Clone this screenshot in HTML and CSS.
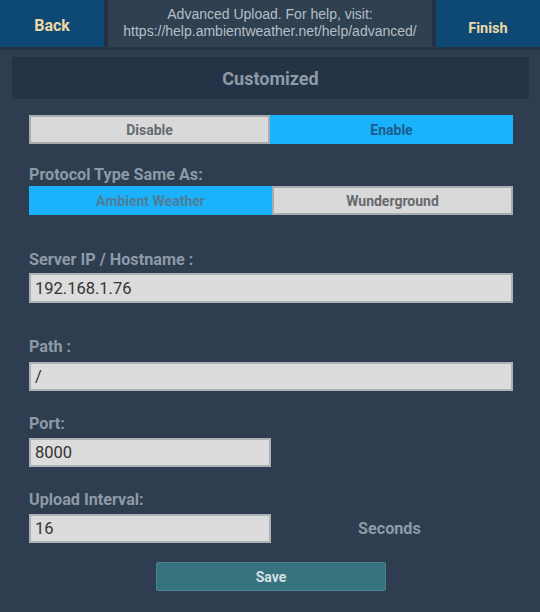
FILE: index.html
```html
<!DOCTYPE html>
<html>
<head>
<meta charset="utf-8">
<link rel="stylesheet" href="styles.css">
</head>
<body>
<div class="topbar">
  <div class="navbtn back">Back</div>
  <div class="helptext">Advanced Upload. For help, visit:<br>https://help.ambientweather.net/help/advanced/</div>
  <div class="navbtn finish">Finish</div>
</div>
<div class="panel-title">Customized</div>
<div class="content">
  <div class="seg seg-enable">
    <div class="seg-item off narrow">Disable</div>
    <div class="seg-item on dark">Enable</div>
  </div>
  <div class="label lbl-protocol">Protocol Type Same As:</div>
  <div class="seg">
    <div class="seg-item on muted">Ambient Weather</div>
    <div class="seg-item off narrow">Wunderground</div>
  </div>
  <div class="label lbl-server">Server IP / Hostname :</div>
  <div class="input wide tall">192.168.1.76</div>
  <div class="label lbl-path">Path :</div>
  <div class="input wide">/</div>
  <div class="label lbl-port">Port:</div>
  <div class="input half">8000</div>
  <div class="label lbl-port">Upload Interval:</div>
  <div class="row">
    <div class="input half">16</div>
    <div class="unit">Seconds</div>
  </div>
  <div class="save-wrap"><div class="save">Save</div></div>
</div>
</body>
</html>
```
FILE: styles.css
```css
html, body {
  margin: 0;
  padding: 0;
}
body {
  background: #2e3e50;
  width: 540px;
  height: 612px;
  overflow: hidden;
  font-family: Roboto, "Liberation Sans", sans-serif;
}
.topbar {
  display: grid;
  grid-template-columns: 104px 1fr 104px;
  column-gap: 4px;
  height: 47px;
  background: #243142;
  border-bottom: 3px solid #263445;
}
.navbtn {
  background: #0e4875;
  display: flex;
  align-items: center;
  justify-content: center;
  font-weight: bold;
  color: #ecd9a6;
}
.back {
  font-size: 16px;
  padding-top: 3px;
}
.finish {
  font-size: 14.5px;
  padding-top: 10px;
}
.helptext {
  background: #2f4050;
  color: #b4bfc8;
  font-family: "Liberation Sans", Arial, sans-serif;
  font-size: 14px;
  line-height: 17px;
  text-align: center;
  padding-top: 6px;
  box-sizing: border-box;
}
.panel-title {
  margin: 7px 11px 0 12px;
  height: 42px;
  background: #243446;
  color: #8e9aa6;
  font-weight: bold;
  font-size: 18px;
  display: flex;
  align-items: center;
  justify-content: center;
}
.content {
  padding: 0 27px 0 29px;
}
.seg {
  display: flex;
  height: 29px;
}
.seg-enable {
  margin-top: 16px;
}
.seg-item {
  flex: 1;
  display: flex;
  align-items: center;
  justify-content: center;
  font-weight: bold;
  font-size: 14px;
  box-sizing: border-box;
}
.seg-item.narrow {
  flex: 0 0 241px;
}
.seg-item.off {
  background: #d9d9d9;
  border: 2px solid #a9acaf;
  color: #666b70;
}
.seg-item.on {
  background: #1ab2fa;
}
.seg-item.dark {
  color: #1a5d8c;
}
.seg-item.muted {
  color: #4f7d98;
}
.label {
  color: #8d9aa7;
  font-weight: bold;
  font-size: 16.2px;
  line-height: 18px;
}
.lbl-protocol {
  margin-top: 22px;
  margin-bottom: 2px;
}
.lbl-server {
  margin-top: 36px;
  margin-bottom: 4px;
}
.lbl-path {
  margin-top: 35px;
  margin-bottom: 6px;
}
.lbl-port {
  margin-top: 24px;
  margin-bottom: 5px;
}
.input {
  height: 29px;
  box-sizing: border-box;
  background: #dcdcdc;
  border: 2px solid #adb2b7;
  color: #333333;
  font-size: 16.5px;
  display: flex;
  align-items: center;
  padding-left: 4px;
}
.input.tall {
  height: 30px;
}
.wide {
  width: 484px;
}
.half {
  width: 242px;
}
.row {
  display: flex;
  align-items: center;
}
.unit {
  margin-left: 87px;
  color: #8d9aa7;
  font-weight: bold;
  font-size: 16.2px;
}
.save-wrap {
  display: flex;
  justify-content: center;
  margin-top: 19px;
}
.save {
  width: 230px;
  height: 29px;
  box-sizing: border-box;
  background: #36737e;
  border: 1px solid #4a8590;
  border-radius: 2px;
  color: #d2e0e3;
  font-weight: bold;
  font-size: 14px;
  display: flex;
  align-items: center;
  justify-content: center;
}
```
